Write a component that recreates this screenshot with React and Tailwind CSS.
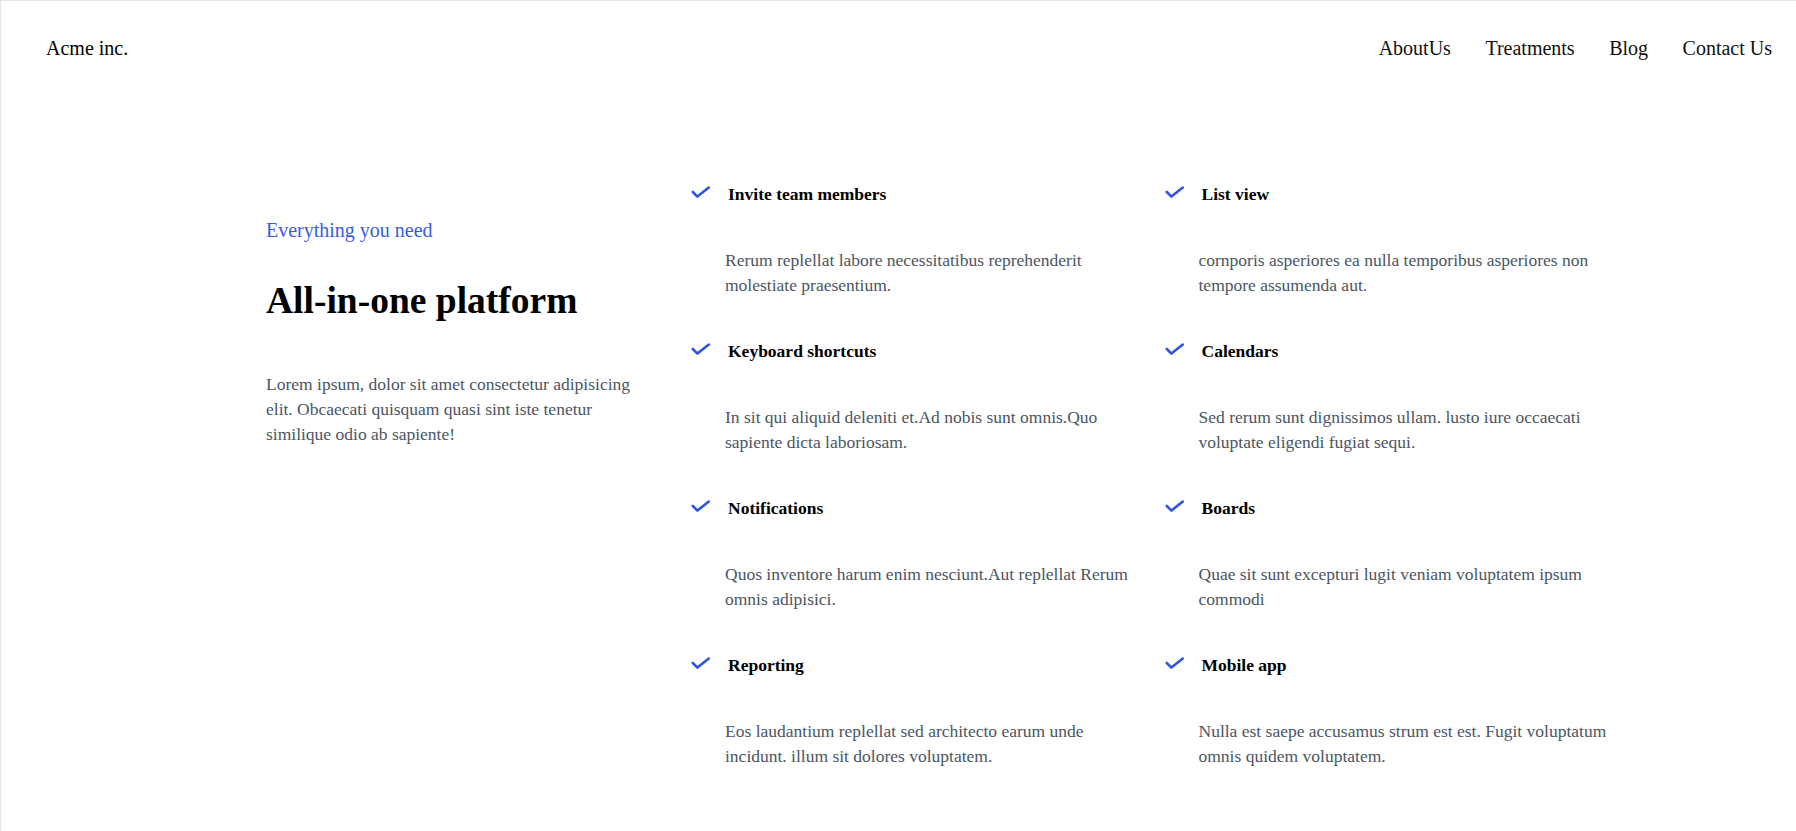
const features = [
  {
    title: 'Invite team members',
    body: 'Rerum replellat labore necessitatibus reprehenderit molestiate praesentium.',
  },
  {
    title: 'List view',
    body: 'cornporis asperiores ea nulla temporibus asperiores non tempore assumenda aut.',
  },
  {
    title: 'Keyboard shortcuts',
    body: 'In sit qui aliquid deleniti et.Ad nobis sunt omnis.Quo sapiente dicta laboriosam.',
  },
  {
    title: 'Calendars',
    body: 'Sed rerum sunt dignissimos ullam. lusto iure occaecati voluptate eligendi fugiat sequi.',
  },
  {
    title: 'Notifications',
    body: 'Quos inventore harum enim nesciunt.Aut replellat Rerum omnis adipisici.',
  },
  {
    title: 'Boards',
    body: 'Quae sit sunt excepturi lugit veniam voluptatem ipsum commodi',
  },
  {
    title: 'Reporting',
    body: 'Eos laudantium replellat sed architecto earum unde incidunt. illum sit dolores voluptatem.',
  },
  {
    title: 'Mobile app',
    body: 'Nulla est saepe accusamus strum est est. Fugit voluptatum omnis quidem voluptatem.',
  },
];

function Check() {
  return (
    <svg viewBox="0 0 20 13" className="w-[20px] h-[13px] shrink-0 mt-[4px]" fill="none">
      <path d="M1.8 6l4.6 4.6L17.8 1.6" stroke="#2f55e0" strokeWidth="2.6" strokeLinecap="round" strokeLinejoin="round" />
    </svg>
  );
}

export default function App() {
  return (
    <div className="min-h-screen bg-white text-[#111] border-t border-l border-[#e5e5e5] font-['Liberation_Serif','Times_New_Roman',serif]">
      {/* top nav */}
      <nav className="h-[93px] flex items-center justify-between pl-[45px] pr-[24px] text-[20px] leading-[28px]">
        <a href="#" className="text-black">Acme inc.</a>
        <ul className="flex gap-[34.5px]">
          <li><a href="#">AboutUs</a></li>
          <li><a href="#">Treatments</a></li>
          <li><a href="#">Blog</a></li>
          <li><a href="#">Contact Us</a></li>
        </ul>
      </nav>

      <section className="flex pl-[265px] pt-[88px]">
        {/* intro */}
        <div className="w-[425px] shrink-0 pt-[34px]">
          <p className="text-[20px] leading-[28px] text-[#3a5ce0]">Everything you need</p>
          <h2 className="mt-[34px] text-[37.5px] leading-[45px] font-bold text-black">All-in-one platform</h2>
          <p className="mt-[49px] max-w-[380px] text-[17.5px] leading-[25px] text-[#4b5563]">
            Lorem ipsum, dolor sit amet consectetur adipisicing elit. Obcaecati quisquam quasi sint iste tenetur similique odio ab sapiente!
          </p>
        </div>

        {/* feature grid */}
        <dl className="grid grid-cols-[473.5px_472px] gap-y-[41.5px]">
          {features.map((f) => (
            <div key={f.title}>
              <dt className="flex gap-[17px] text-[17.5px] leading-[25px] font-bold text-black">
                <Check />
                {f.title}
              </dt>
              <dd className="mt-[40.5px] ml-[34px] max-w-[420px] text-[17.5px] leading-[25px] text-[#4b5563]">
                {f.body}
              </dd>
            </div>
          ))}
        </dl>
      </section>
    </div>
  );
}
